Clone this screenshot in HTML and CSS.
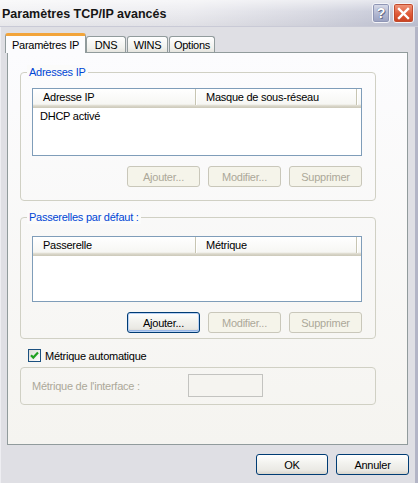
FILE: index.html
```html
<!DOCTYPE html>
<html lang="fr">
<head>
<meta charset="utf-8">
<title>Paramètres TCP/IP avancés</title>
<link rel="stylesheet" href="styles.css">
</head>
<body>
<div class="window">
  <div class="titlebar">
    <span class="title">Paramètres TCP/IP avancés</span>
    <div class="caption-btns">
      <span class="cbtn help">?</span>
      <span class="cbtn close">
        <svg width="13" height="13" viewBox="0 0 13 13"><path d="M2 2 L11 11 M11 2 L2 11" stroke="#fff" stroke-width="2.4" stroke-linecap="square"/></svg>
      </span>
    </div>
  </div>

  <div class="tabs">
    <span class="tab selected">Paramètres IP</span>
    <span class="tab t-dns">DNS</span>
    <span class="tab t-wins">WINS</span>
    <span class="tab t-opt">Options</span>
  </div>

  <div class="panel">
    <div class="group g1">
      <span class="legend">Adresses IP</span>
      <div class="listview lv1">
        <div class="lv-header">
          <span class="col c1">Adresse IP</span>
          <span class="col c2">Masque de sous-réseau</span>
        </div>
        <div class="lv-row">DHCP activé</div>
      </div>
      <div class="btnrow">
        <span class="btn disabled">Ajouter...</span>
        <span class="btn disabled">Modifier...</span>
        <span class="btn disabled">Supprimer</span>
      </div>
    </div>

    <div class="group g2">
      <span class="legend">Passerelles par défaut :</span>
      <div class="listview lv2">
        <div class="lv-header">
          <span class="col c1">Passerelle</span>
          <span class="col c2">Métrique</span>
        </div>
      </div>
      <div class="btnrow">
        <span class="btn default">Ajouter...</span>
        <span class="btn disabled">Modifier...</span>
        <span class="btn disabled">Supprimer</span>
      </div>
    </div>

    <div class="checkrow">
      <span class="checkbox">
        <svg width="11" height="11" viewBox="0 0 11 11"><path d="M2 5.2 L4.3 7.6 L9 2.6" fill="none" stroke="#21a121" stroke-width="2.2"/></svg>
      </span>
      <span class="checklabel">Métrique automatique</span>
    </div>

    <div class="group g3">
      <span class="metric-label">Métrique de l'interface :</span>
      <span class="input"></span>
    </div>
  </div>

  <div class="footer">
    <span class="btn normal ok">OK</span>
    <span class="btn normal">Annuler</span>
  </div>
</div>
</body>
</html>
```

FILE: styles.css
```css
html, body {
  margin: 0;
  padding: 0;
}
body {
  width: 418px;
  height: 483px;
  overflow: hidden;
  font-family: "Liberation Sans", Arial, sans-serif;
  font-size: 11px;
  letter-spacing: -0.25px;
  color: #000;
}
.window {
  width: 418px;
  height: 483px;
  box-sizing: border-box;
  background: #dfdfe4;
  border-right: 3px solid #b3b5c6;
  border-left: 1px solid #eeeef2;
  display: flex;
  flex-direction: column;
}

/* Title bar */
.titlebar {
  height: 27px;
  flex: none;
  display: flex;
  align-items: center;
  justify-content: space-between;
  background:
    linear-gradient(to bottom, rgba(255,255,255,0.55), rgba(255,255,255,0) 45%, rgba(0,0,30,0.05)),
    linear-gradient(to right, #f3f3f5 0%, #ececf0 45%, #d9dae3 75%, #c3c6d6 100%);
  border-bottom: 1px solid #c9cad6;
  box-sizing: border-box;
  margin-left: -1px;
  margin-right: -3px;
}
.title {
  font-weight: bold;
  font-size: 12.5px;
  letter-spacing: 0;
  color: #151515;
  padding-left: 2px;
  padding-top: 1px;
}
.caption-btns {
  display: flex;
  gap: 3px;
  padding-right: 4px;
  padding-top: 0px;
}
.cbtn {
  box-sizing: border-box;
  height: 20px;
  border-radius: 3px;
  border: 1px solid #f4f4f8;
  display: flex;
  align-items: center;
  justify-content: center;
}
.help {
  width: 18px;
  background: linear-gradient(to bottom, #d9dcea, #aeb4cf 60%, #9aa1c0);
  color: #fff;
  font-weight: bold;
  font-size: 14px;
  letter-spacing: 0;
  text-shadow: 0 0 1px #4a5070, 1px 1px 0 #6a7090;
  box-shadow: inset 0 0 0 1px #8f96b5;
}
.close {
  width: 21px;
  background: linear-gradient(to bottom, #f09a80, #df5a38 55%, #c8401f);
  box-shadow: inset 0 0 0 1px #c14a2c;
}

/* Tabs */
.tabs {
  flex: none;
  display: flex;
  align-items: flex-end;
  margin-top: 6px;
  margin-left: 4px;
  height: 20px;
  margin-bottom: -1px;
  position: relative;
  z-index: 2;
}
.tab {
  box-sizing: border-box;
  height: 16px;
  margin-bottom: 1px;
  border: 1px solid #919b9c;
  border-bottom: none;
  border-radius: 3px 3px 0 0;
  background: linear-gradient(to bottom, #ffffff, #f1f1ee 70%, #e6e5df);
  display: flex;
  align-items: center;
  justify-content: center;
  line-height: 14px;
  padding-top: 1px;
}
.tab.selected {
  width: 81px;
  height: 20px;
  margin-bottom: 0;
  background: #fcfcfe;
  border-top: 3px solid #f2a43a;
  border-color: #f2a43a #919b9c #919b9c #919b9c;
  padding-top: 0;
  border-radius: 3px 3px 0 0;
}
.t-dns { width: 40px; }
.t-wins { width: 41px; margin-left: 1px; }
.t-opt { width: 46px; margin-left: 1px; }

/* Panel */
.panel {
  flex: none;
  margin-left: 6px;
  width: 401px;
  height: 393px;
  box-sizing: border-box;
  border: 1px solid #919b9c;
  background: linear-gradient(to bottom, #fcfcfe, #f5f4f0);
  padding: 19px 0 0 12px;
  display: flex;
  flex-direction: column;
  align-items: flex-start;
}

.group {
  position: relative;
  box-sizing: border-box;
  width: 356px;
  border: 1px solid #d0d0c4;
  border-radius: 4px;
}
.legend {
  position: absolute;
  top: -8px;
  left: 6px;
  padding: 0 2px;
  background: #fbfbfa;
  color: #0046d5;
  line-height: 14px;
}
.g1 {
  padding: 15px 0 13px 11px;
}
.g2 {
  margin-top: 16px;
  padding: 18px 0 5px 11px;
}
.listview {
  box-sizing: border-box;
  width: 330px;
  border: 1px solid #7f9db9;
  background: #fff;
}
.lv1 { height: 68px; }
.lv2 { height: 66px; }
.lv-header {
  height: 19px;
  box-sizing: border-box;
  display: flex;
  background: linear-gradient(to bottom, #ffffff 0%, #f6f6f3 80%, #e3e1d6 85%, #d6d3c6 92%, #cbc8b8 100%);
}
.col {
  box-sizing: border-box;
  height: 16px;
  line-height: 16px;
  padding-left: 10px;
  margin-top: 0;
  border-right: 1px solid #c7c5b2;
  box-shadow: 1px 0 0 #fff;
}
.c1 { width: 163px; }
.c2 { width: 161px; }
.lv-row {
  padding: 1px 0 0 7px;
  line-height: 14px;
}

.btnrow {
  display: flex;
  justify-content: flex-end;
  gap: 8px;
  width: 330px;
  margin-top: 10px;
}
.btn {
  box-sizing: border-box;
  width: 73px;
  height: 21px;
  border-radius: 3px;
  display: flex;
  align-items: center;
  justify-content: center;
  line-height: 14px;
}
.btn.disabled {
  border: 1px solid #c9c7ba;
  background: #f5f4ea;
  color: #aca899;
}
.btn.default, .btn.normal {
  border: 1px solid #003c74;
  background: linear-gradient(to bottom, #ffffff 0%, #f3f3ef 40%, #eae9e4 80%, #d8d5cc 100%);
  color: #000;
}
.btn.default {
  box-shadow: inset 0 0 0 1px #b9d1f3, inset 0 -1px 0 1px #99b7e6;
}

.checkrow {
  display: flex;
  align-items: center;
  margin-top: 10px;
  margin-left: 8px;
  height: 13px;
}
.checkbox {
  box-sizing: border-box;
  width: 13px;
  height: 13px;
  border: 1px solid #1c5180;
  background: linear-gradient(135deg, #dcdcd6, #ffffff);
  display: flex;
  align-items: center;
  justify-content: center;
}
.checklabel {
  margin-left: 4px;
  line-height: 14px;
}

.g3 {
  margin-top: 5px;
  padding: 6px 0 7px 11px;
  display: flex;
  align-items: center;
}
.metric-label {
  color: #aca899;
  width: 156px;
}
.input {
  box-sizing: border-box;
  width: 75px;
  height: 23px;
  border: 1px solid #c3c3c0;
  background: #f5f4f0;
}

.footer {
  flex: none;
  display: flex;
  justify-content: flex-end;
  gap: 8px;
  margin-top: 9px;
  padding-right: 6px;
}
.ok { width: 72px; }
```
